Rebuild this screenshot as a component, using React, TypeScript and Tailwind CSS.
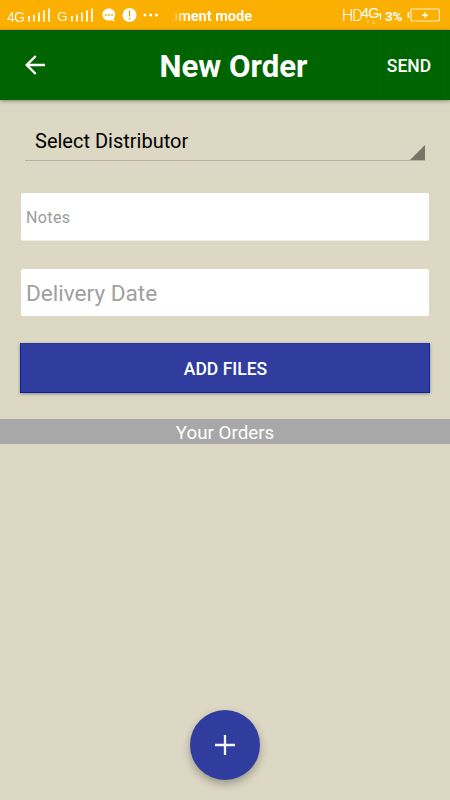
function Signal() {
  return (
    <svg className="block h-[14px] w-[25px] shrink-0" viewBox="0 0 25 14" fill="#fff" fillOpacity=".85">
      <rect x="1" y="8" width="2" height="5.500" />
      <rect x="6" y="6.500" width="2" height="7" />
      <rect x="11" y="4.500" width="2" height="9" />
      <rect x="16" y="2.500" width="2" height="11" />
      <rect x="21" y="0.500" width="2" height="13" />
    </svg>
  );
}

function StatusBar() {
  return (
    <div className="flex h-[30px] items-start bg-[#fbaf00] pl-[7px] text-white">
      <span className="mt-[9px] w-[20px] text-[14px] leading-[16px] tracking-[-0.900px] opacity-90 font-['Liberation_Sans',sans-serif]">4G</span>
      <div className="mt-[8px]"><Signal /></div>
      <span className="mt-[9px] ml-[5px] w-[13px] text-[13.500px] leading-[16px] tracking-[-0.500px] opacity-90 font-['Liberation_Sans',sans-serif]">G</span>
      <div className="mt-[8px]"><Signal /></div>
      <svg className="mt-[7px] ml-[7px] h-[16px] w-[14px] shrink-0" viewBox="0 0 14 16">
        <path d="M6.800 1.500c3.600 0 6.400 2.600 6.400 6 0 1.800-.7 3.300-1.800 4.400l1.700 2.500-3.800-1.200c-.8.3-1.600.4-2.500.4C3.100 13.600.4 11 .4 7.500s2.800-6 6.400-6z" fill="#fff" />
        <g fill="#fbaf00"><circle cx="3.900" cy="8" r="1" /><circle cx="7" cy="8" r="1" /><circle cx="10.100" cy="8" r="1" /></g>
      </svg>
      <svg className="mt-[7px] ml-[6px] h-[16px] w-[15px] shrink-0" viewBox="0 0 15 16">
        <circle cx="7.500" cy="8" r="7" fill="#fff" />
        <path d="M7.500 3.500v6M7.500 11v1.600" stroke="#e69d00" strokeWidth="1.300" />
      </svg>
      <svg className="mt-[13px] ml-[6px] h-[4px] w-[15px] shrink-0" viewBox="0 0 15 4" fill="#fff">
        <circle cx="2" cy="2" r="1.500" /><circle cx="7.700" cy="2" r="1.500" /><circle cx="13.400" cy="2" r="1.500" />
      </svg>
      <div className="mt-[7px] ml-[10px] flex h-[18px] w-[84px] justify-end overflow-hidden [mask-image:linear-gradient(to_right,transparent_4px,black_18px)]">
        <span className="whitespace-nowrap text-[14.500px] leading-[19px] font-bold">pment mode</span>
      </div>
      <span className="mt-[6px] ml-auto w-[19px] text-[16px] leading-[19px] tracking-[-1.200px] font-light">HD</span>
      <div className="mt-[5px] flex w-[24px] flex-col">
        <div className="flex items-end">
          <span className="text-[14.500px] leading-[16px] tracking-[-0.800px] font-['Liberation_Sans',sans-serif]">4G</span>
          <svg className="mb-[1px] h-[7px] w-[3px]" viewBox="0 0 3 7"><path d="M0 2L1.500 1V7" fill="none" stroke="#fff" strokeWidth="1.200" /></svg>
        </div>
        <svg className="-mt-px ml-[5px] h-[4px] w-[10px]" viewBox="0 0 10 4" fill="#fff" fillOpacity=".25"><path d="M0 0h4L2 4zM5.500 4h4l-2-4z" /></svg>
      </div>
      <span className="mt-[7px] w-[22px] whitespace-nowrap text-[13.500px] leading-[18px] font-bold tracking-[-0.200px]">3%</span>
      <svg className="mt-[8px] mr-[10px] h-[14px] w-[33px] shrink-0" viewBox="0 0 33 14">
        <path d="M2.500 5H1.300v4h1.200" fill="none" stroke="#fff" strokeWidth="1.500" />
        <rect x="4" y="1" width="28.300" height="12" rx="1" fill="none" stroke="#fff" strokeOpacity=".8" strokeWidth="1.200" />
        <path d="M19.200 3.500L14.500 8h3.200l-1 3 5-4.600h-3.400z" fill="#fff" />
      </svg>
    </div>
  );
}

function Header() {
  return (
    <header className="relative flex h-[70px] items-center border-t border-[#075400] bg-[#006500] text-white shadow-[0_1px_4px_rgba(0,0,0,0.4)]">
      <button className="flex w-[70px] justify-center pb-[2px]" aria-label="Back">
        <svg className="h-[20px] w-[20px]" viewBox="0 0 20 20" fill="none" stroke="#fff" strokeWidth="2.400">
          <path d="M20 10H2M10.700 1L1.700 10l9 9" />
        </svg>
      </button>
      <h1 className="ml-[89.500px] w-[216.500px] whitespace-nowrap pt-[2px] text-[31.200px] leading-[36px] font-bold">New Order</h1>
      <button className="h-full w-[65px] border-x border-[#075d05] pt-[1px] pl-[1px] text-[17.500px] font-medium">SEND</button>
    </header>
  );
}

export default function App() {
  return (
    <div className="flex h-[800px] w-[450px] flex-col overflow-hidden bg-[#ddd8c4] font-[Roboto,sans-serif]">
      <StatusBar />
      <Header />
      <main className="flex flex-1 flex-col">
        <div className="mx-[25px] mt-[25px] flex h-[36px] justify-between border-b border-[#b5b3a2] pl-[10px]">
          <span className="pt-[4px] text-[20px] leading-[24px] text-black">Select Distributor</span>
          <svg className="mt-auto h-[15px] w-[15px]" viewBox="0 0 15 15"><path d="M15 0v15H0z" fill="#797669" /></svg>
        </div>
        <div className="mx-[21px] mt-[32px] flex h-[48px] items-center rounded-[2px] border-b border-[#f0eee8] bg-white pt-[2px] pl-[5px] text-[16px] tracking-[0.400px] text-[#9b9b9b]">Notes</div>
        <div className="mx-[21px] mt-[28px] flex h-[47px] items-center rounded-[2px] bg-white pt-[3px] pl-[5px] text-[22.600px] text-[#a0a0a0]">Delivery Date</div>
        <button className="mx-[20px] mt-[27px] h-[50px] border border-t-[#2637a1] border-r-[#0722a5] border-b-[#0722a5] border-l-[#0722a5] bg-[#303d9f] pt-[2px] pl-[1px] text-[17.500px] font-medium text-white shadow-[0_1px_3px_rgba(0,0,0,0.35)]">ADD FILES</button>
        <div className="mt-[26px] flex h-[25px] items-center justify-center bg-[#a8a8a8] pt-[3px] text-[18.800px] text-white">Your Orders</div>
        <button className="mx-auto mt-auto mb-[20px] flex h-[70px] w-[70px] items-center justify-center rounded-full bg-[#303d9f] shadow-[0_4px_8px_rgba(0,0,0,0.3)]" aria-label="Add order">
          <svg className="h-[20px] w-[20px]" viewBox="0 0 20 20" stroke="#f4f5ff" strokeWidth="2.300"><path d="M10 0v20M0 10h20" /></svg>
        </button>
      </main>
    </div>
  );
}
